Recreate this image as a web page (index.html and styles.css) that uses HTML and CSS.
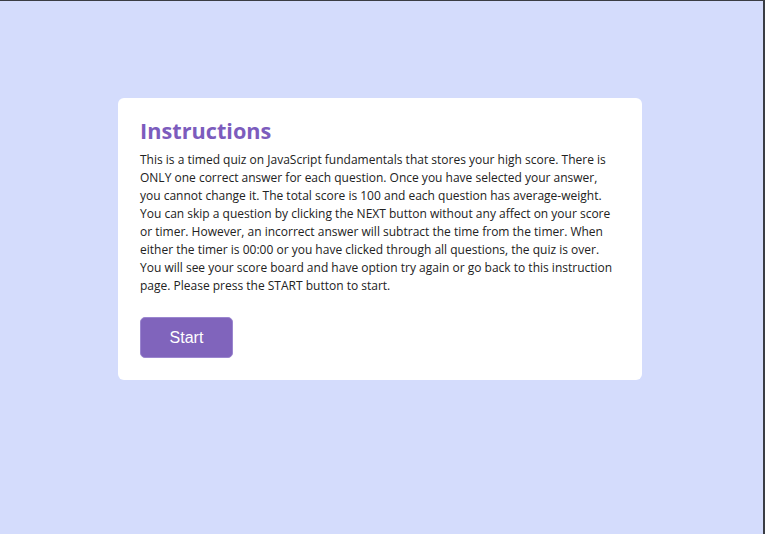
FILE: index.html
```html
<!DOCTYPE html>
<html>
<head>
<meta charset="utf-8">
<link rel="stylesheet" href="styles.css">
</head>
<body>
<div class="frame">
  <main class="card">
    <h1 class="title">Instructions</h1>
    <p class="text">This is a timed quiz on JavaScript fundamentals that stores your high score. There is ONLY one correct answer for each question. Once you have selected your answer, you cannot change it. The total score is 100 and each question has average-weight. You can skip a question by clicking the NEXT button without any affect on your score or timer. However, an incorrect answer will subtract the time from the timer. When either the timer is 00:00 or you have clicked through all questions, the quiz is over. You will see your score board and have option try again or go back to this instruction page. Please press the START button to start.</p>
    <button class="start">Start</button>
  </main>
</div>
</body>
</html>
```

FILE: styles.css
```css
html, body {
  margin: 0;
  padding: 0;
  height: 100%;
}
body {
  background: #3a3d44;
  font-family: "Open Sans", sans-serif;
}
.frame {
  box-sizing: border-box;
  height: 534px;
  margin-top: 1px;
  margin-right: 2px;
  background: #d4dcfc;
  padding-top: 97px;
  display: flex;
  flex-direction: column;
  align-items: flex-start;
}
.card {
  margin-left: 118px;
  width: 524px;
  box-sizing: border-box;
  background: #ffffff;
  border-radius: 6px;
  padding: 18px 22px 22px 22px;
}
.title {
  margin: 0;
  font-size: 21.7px;
  line-height: 30px;
  font-weight: 700;
  color: #7c5cbd;
}
.text {
  margin: 5px 0 0 0;
  font-size: 12px;
  line-height: 18px;
  color: #222222;
}
.start {
  display: block;
  margin-top: 22px;
  width: 93px;
  height: 41px;
  border: 1px solid #9b86cf;
  border-radius: 5px;
  background: #8064bc;
  color: #ffffff;
  font-family: "Liberation Sans", Arial, sans-serif;
  font-size: 16px;
  cursor: pointer;
}
```
